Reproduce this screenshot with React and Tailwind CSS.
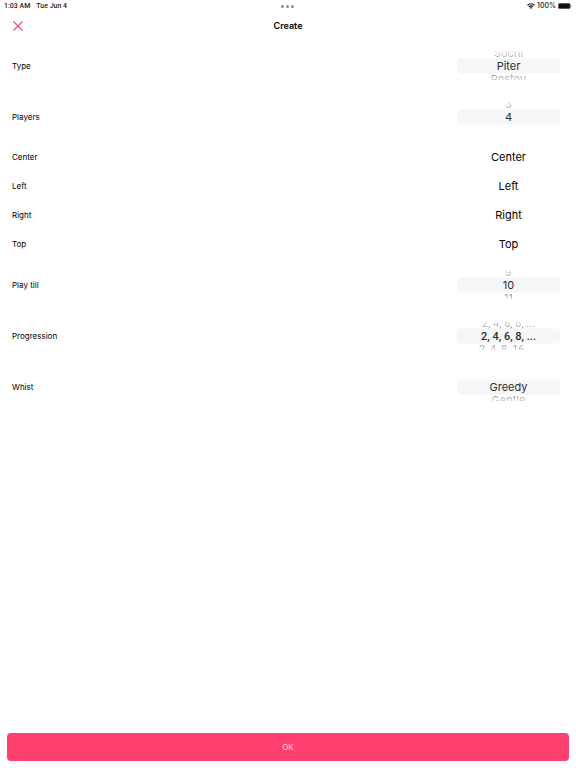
import { useState } from 'react';

const WHEELS = {
  type: ['Sochi', 'Piter', 'Rostov'],
  players: ['3', '4'],
  till: ['9', '10', '11'],
  progression: ['2, 4, 6, 8, ...', '2, 4, 6, 8, ...', '2, 4, 8, 16, ...'],
  whist: ['Greedy', 'Gentle']
};

const SEATS = ['Center', 'Left', 'Right', 'Top'];

const StatusBar = () => (
  <div className="grid h-3 grid-cols-3 items-center px-1 text-[7px] leading-3 font-medium text-[#222]">
    <div className="flex gap-1.5 font-['Roboto',sans-serif]">
      <span>1:03 AM</span>
      <span>Tue Jun 4</span>
    </div>
    <div className="flex justify-center gap-0.5">
      <span className="size-[3px] rounded-full bg-[#8e8e8e]" />
      <span className="size-[3px] rounded-full bg-[#8e8e8e]" />
      <span className="size-[3px] rounded-full bg-[#8e8e8e]" />
    </div>
    <div className="flex items-center justify-end gap-0.5">
      <svg viewBox="0 0 16 12" className="h-1.5 w-2" fill="none" stroke="#111" strokeWidth="2.4">
        <path d="M1 4.6C5 .8 11 .8 15 4.6" />
        <path d="M3.8 7.6c2.4-2.2 6-2.2 8.4 0" />
        <path d="M8 11.8 5.6 9.4c1.4-1.2 3.4-1.2 4.8 0z" fill="#111" stroke="none" />
      </svg>
      <span>100%</span>
      <svg viewBox="0 0 28 12" className="h-1.5 w-3.5">
        <rect x=".5" y=".5" width="24" height="11" rx="3" fill="#111" stroke="#777" />
        <path d="M26 4v4c1.6-.6 1.6-3.4 0-4z" fill="#777" />
      </svg>
    </div>
  </div>
);

const Wheel = ({ label, options, value, onChange }) => {
  // one slot above and one below the selected option
  const slots = [value - 1, value, value + 1];
  const font = label === 'Progression' ? "font-['Roboto',sans-serif]" : '';

  return (
    <div
      role="listbox"
      aria-label={label}
      className="relative flex h-[29px] w-[103px] flex-col justify-center overflow-hidden pt-0.5"
    >
      <div className="absolute inset-x-0 top-1/2 h-[15px] -translate-y-1/2 rounded bg-[#f4f6f7]" />
      {slots.map((index) => {
        if (options[index] === undefined) {
          return <div key={index} className="h-[13px] shrink-0" />;
        }
        const isSelected = index === value;
        let tone = 'text-[#2c2c2e]';
        if (index < value) tone = 'bg-linear-to-b from-white from-20% to-[#808080] bg-clip-text text-transparent';
        if (index > value) tone = 'bg-linear-to-t from-white from-20% to-[#808080] bg-clip-text text-transparent';
        return (
          <button
            key={index}
            type="button"
            role="option"
            aria-selected={isSelected}
            onClick={() => onChange(index)}
            className={`relative h-[13px] shrink-0 text-[11px] leading-[13px] whitespace-nowrap ${font} ${tone} ${
              isSelected && label === 'Progression' ? 'font-medium' : ''
            }`}
          >
            {options[index]}
          </button>
        );
      })}
    </div>
  );
};

const WheelRow = ({ label, ...rest }) => (
  <div className="flex h-[51px] items-center justify-between">
    <span>{label}</span>
    <Wheel label={label} {...rest} />
  </div>
);

const App = () => {
  const [game, setGame] = useState({ type: 1, players: 1, till: 1, progression: 1, whist: 0 });
  const [names, setNames] = useState({ Center: 'Center', Left: 'Left', Right: 'Right', Top: 'Top' });

  const wheelProps = (field) => ({
    options: WHEELS[field],
    value: game[field],
    onChange: (index) => setGame(prev => ({ ...prev, [field]: index }))
  });

  const handleNameChange = (e) => {
    const { name, value } = e.target;
    setNames(prev => ({ ...prev, [name]: value }));
  };

  return (
    <div className="flex min-h-screen flex-col bg-white font-['Inter','Liberation_Sans',sans-serif] text-black">
      <StatusBar />

      <header className="grid h-7 grid-cols-3 items-center px-3">
        <button type="button" aria-label="Close" className="w-3">
          <svg viewBox="0 0 12 12" className="size-3" fill="none" stroke="#f0476f" strokeWidth="1.1">
            <path d="M1.5 1.5l9 9M10.5 1.5l-9 9" />
          </svg>
        </button>
        <h1 className="text-center text-[9px] font-semibold">Create</h1>
      </header>

      <form className="flex flex-1 flex-col" onSubmit={(e) => e.preventDefault()}>
        <div className="flex-1 pr-4 pl-3 text-[8px]">
          <WheelRow label="Type" {...wheelProps('type')} />
          <WheelRow label="Players" {...wheelProps('players')} />

          <div className="pb-px">
            {SEATS.map((seat) => (
              <div key={seat} className="flex h-[29px] items-center justify-between">
                <label htmlFor={seat}>{seat}</label>
                <input
                  id={seat}
                  type="text"
                  name={seat}
                  value={names[seat]}
                  onChange={handleNameChange}
                  className="w-[103px] pt-0.5 text-center text-[11px] focus:outline-none"
                />
              </div>
            ))}
          </div>

          <WheelRow label="Play till" {...wheelProps('till')} />
          <WheelRow label="Progression" {...wheelProps('progression')} />
          <WheelRow label="Whist" {...wheelProps('whist')} />
        </div>

        <div className="p-[7px]">
          <button type="submit" className="h-7 w-full rounded bg-[#ff3f6e] text-[8px] text-[#ffd9e2]">
            OK
          </button>
        </div>
      </form>
    </div>
  );
};

export default App;
